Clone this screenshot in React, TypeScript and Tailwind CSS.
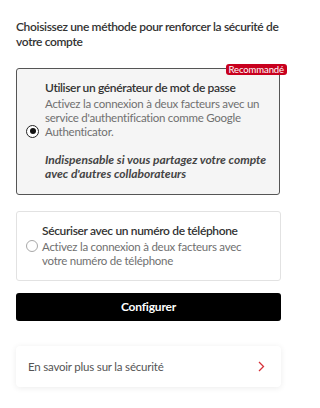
import React from 'react';

const font = { fontFamily: 'Lato, "Noto Sans", sans-serif' };

function Radio({ checked }: { checked?: boolean }) {
  return checked ? (
    <span className="flex h-[13px] w-[13px] shrink-0 items-center justify-center rounded-full border-[1.5px] border-[#222] bg-white">
      <span className="h-[6px] w-[6px] rounded-full bg-[#111]" />
    </span>
  ) : (
    <span className="h-[12px] w-[12px] shrink-0 rounded-full border border-[#a8a8a8] bg-white" />
  );
}

export default function App() {
  return (
    <div className="h-[408px] w-[320px] bg-white" style={font}>
      <div className="ml-4 w-[265px] pt-[19px]">
        {/* Heading */}
        <h1 className="whitespace-nowrap text-[12px] font-semibold leading-[15px] tracking-[-0.35px] text-[#333]">
          Choisissez une méthode pour renforcer la sécurité de
          <br />
          votre compte
        </h1>

        {/* Option 1 - selected */}
        <div className="relative mt-[19px] w-[264px] rounded-[3px] border border-[#555] bg-[#f5f5f5] pb-[13px] pl-[9px] pr-3 pt-[12px]">
          <span className="absolute -right-2 -top-[5px] rounded-[3px] bg-[#c8001e] px-[3px] text-[9.5px] leading-[11px] tracking-[-0.1px] text-white">
            Recommandé
          </span>
          <div className="flex items-center gap-[6px]">
            <Radio checked />
            <div className="whitespace-nowrap text-[11.5px] leading-[14px] tracking-[-0.25px]">
              <div className="text-[12px] font-semibold tracking-[-0.35px] text-[#333]">Utiliser un générateur de mot de passe</div>
              <div className="mt-[2px] text-[#707070]">
                Activez la connexion à deux facteurs avec un
                <br />
                service d'authentification comme Google
                <br />
                Authenticator.
              </div>
              <div className="mt-[14px] text-[12px] font-bold italic tracking-[0px] text-[#444]">
                Indispensable si vous partagez votre compte
                <br />
                avec d'autres collaborateurs
              </div>
            </div>
          </div>
        </div>

        {/* Option 2 */}
        <div className="mt-[16px] rounded-[3px] border border-[#e2e2e2] bg-white py-[12px] pl-[9px] pr-3">
          <div className="flex items-center gap-[4px]">
            <Radio />
            <div className="whitespace-nowrap text-[11.5px] leading-[14px] tracking-[-0.25px]">
              <div className="text-[12px] font-semibold tracking-[-0.35px] text-[#333]">Sécuriser avec un numéro de téléphone</div>
              <div className="mt-[2px] text-[#707070]">
                Activez la connexion à deux facteurs avec
                <br />
                votre numéro de téléphone
              </div>
            </div>
          </div>
        </div>

        <button className="mt-[12px] flex h-[28px] w-full items-center justify-center rounded-[3px] bg-black text-[12px] font-bold tracking-[-0.2px] text-white">
          Configurer
        </button>

        {/* Link card */}
        <div className="mt-[25px] flex h-[41px] items-center justify-between rounded-[4px] bg-white pl-3 pr-4 shadow-[0_1px_6px_rgba(0,0,0,0.08)]">
          <span className="text-[11.5px] tracking-[-0.2px] text-[#555]">En savoir plus sur la sécurité</span>
          <svg width="7" height="11" viewBox="0 0 7 11" fill="none">
            <path d="M1 1l4.5 4.5L1 10" stroke="#d6323a" strokeWidth="1.3" />
          </svg>
        </div>
      </div>
    </div>
  );
}
